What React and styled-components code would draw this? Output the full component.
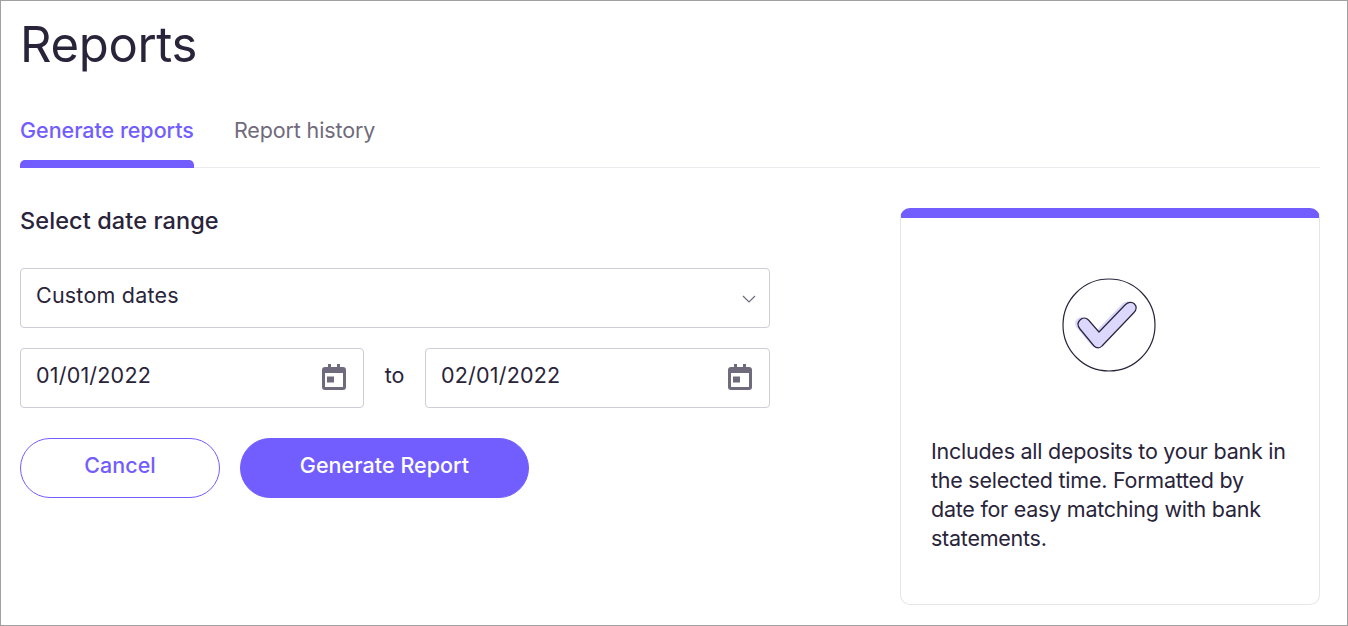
import React from "react";
import styled, { createGlobalStyle } from "styled-components";

const Global = createGlobalStyle`
	html, body { margin: 0; padding: 0; background: #fff; }
	* { box-sizing: border-box; }
	body { font-family: Inter, "Liberation Sans", sans-serif; color: #29243a; }
`;

const Page = styled.div`
	width: 1348px;
	height: 626px;
	border: 1px solid #a0a0a0;
	padding: 0 27px 0 19px;
	overflow: hidden;
`;

const Title = styled.h1`
	margin: 0;
	height: 97px;
	padding-top: 14px;
	font-size: 49px;
	line-height: 60px;
	font-weight: 400;
	letter-spacing: -0.33px;
`;

const Tabs = styled.div`
	display: flex;
	gap: 40px;
	height: 70px;
	border-bottom: 1px solid #ececf0;
`;

const Tab = styled.div`
	position: relative;
	height: 70px;
	padding-top: 19px;
	font-size: 21.5px;
	line-height: 26px;
	font-weight: ${(p) => (p.$active ? 500 : 400)};
	letter-spacing: ${(p) => (p.$active ? "-0.03px" : "-0.13px")};
	color: ${(p) => (p.$active ? "#725efe" : "#6f6b7c")};

	${(p) =>
		p.$active &&
		`&::after {
			content: "";
			position: absolute;
			left: 0;
			right: 0;
			bottom: 0;
			height: 8px;
			background: #725efe;
			border-radius: 5px 5px 0 0;
		}`}
`;

const Content = styled.div`
	display: flex;
	justify-content: space-between;
	padding-top: 40px;
`;

const Form = styled.div`
	width: 750px;
`;

const Heading = styled.h2`
	margin: 0 0 35px;
	font-size: 23.5px;
	line-height: 25px;
	font-weight: 500;
	letter-spacing: 0.1px;
`;

const Field = styled.div`
	height: 60px;
	display: flex;
	align-items: center;
	justify-content: space-between;
	padding: 0 12px 7px 15px;
	border: 1px solid #cfcdd8;
	border-radius: 4px;
	font-size: 21.5px;
	letter-spacing: 0.2px;
`;

const DateRow = styled.div`
	display: grid;
	grid-template-columns: 344px 61px 1fr;
	align-items: center;
	margin-top: 20px;
`;

const To = styled.span`
	text-align: center;
	font-size: 21.5px;
	padding-bottom: 7px;
`;

const CalendarSvg = styled.svg`
	width: 24px;
	height: 26px;
	margin: 4px 5px 0 0;
	fill: #6f6b7c;
`;

const Chevron = styled.svg`
	width: 14px;
	height: 8px;
	margin: 8px 1px 0 0;
	fill: none;
	stroke: #6f6b7c;
	stroke-width: 1.2;
`;

const Actions = styled.div`
	display: flex;
	gap: 20px;
	margin-top: 30px;
`;

const Button = styled.button`
	height: 60px;
	width: ${(p) => p.$width}px;
	padding: 0 0 6px;
	border: 1px solid #725efe;
	border-radius: 30px;
	background: ${(p) => (p.$primary ? "#725efe" : "#fff")};
	color: ${(p) => (p.$primary ? "#fff" : "#725efe")};
	font: 500 21.5px Inter, "Liberation Sans", sans-serif;
	letter-spacing: 0.05px;
`;

const Card = styled.aside`
	width: 420px;
	height: 397px;
	border: 1px solid #e6e6ea;
	border-top: 10px solid #725efe;
	border-radius: 10px;
	padding: 60px 30px 0;
`;

const CheckWrap = styled.div`
	display: flex;
	justify-content: center;
	margin-right: 2px;
`;

const Blurb = styled.p`
	margin: 65px 0 0;
	font-size: 21.5px;
	line-height: 29px;
	letter-spacing: -0.25px;
`;

const CalendarIcon = () => (
	<CalendarSvg viewBox="0 0 24 26">
		<path d="M6 0h3v3h6V0h3v3h3a3 3 0 0 1 3 3v17a3 3 0 0 1-3 3H3a3 3 0 0 1-3-3V6a3 3 0 0 1 3-3h3zM3 9v14h18V9z" fillRule="evenodd" />
		<rect x="5" y="12.5" width="7" height="6" />
	</CalendarSvg>
);

const CHECK_PATH =
	"M18 42 C20.5 39.5 24 39.5 26.5 42 L37 54 L63 27 C66 24 70 23.5 72.5 26 C75 28.5 74.5 32 72 34.5 L40 68 C38 70.5 34.5 70.5 32 68 L18 51 C15.5 48 15.5 44.5 18 42 Z";

const CheckBadge = () => (
	<svg width="94" height="94" viewBox="0 0 94 94" fill="none">
		<circle cx="47" cy="47" r="46" stroke="#29243a" strokeWidth="1.2" />
		<path d={CHECK_PATH} fill="#dcd8fd" transform="translate(-3 -1)" />
		<path d={CHECK_PATH} fill="#dcd8fd" stroke="#29243a" strokeWidth="1.2" />
	</svg>
);

export default function App() {
	return (
		<Page>
			<Global />
			<Title>Reports</Title>
			<Tabs>
				<Tab $active>Generate reports</Tab>
				<Tab>Report history</Tab>
			</Tabs>
			<Content>
				<Form>
					<Heading>Select date range</Heading>
					<Field>
						Custom dates
						<Chevron viewBox="0 0 14 8">
							<path d="M1 1 L7 7 L13 1" />
						</Chevron>
					</Field>
					<DateRow>
						<Field>
							01/01/2022
							<CalendarIcon />
						</Field>
						<To>to</To>
						<Field>
							02/01/2022
							<CalendarIcon />
						</Field>
					</DateRow>
					<Actions>
						<Button $width={200}>Cancel</Button>
						<Button $primary $width={289}>
							Generate Report
						</Button>
					</Actions>
				</Form>
				<Card>
					<CheckWrap>
						<CheckBadge />
					</CheckWrap>
					<Blurb>
						Includes all deposits to your bank in the selected time. Formatted by date for easy matching with bank
						statements.
					</Blurb>
				</Card>
			</Content>
		</Page>
	);
}
